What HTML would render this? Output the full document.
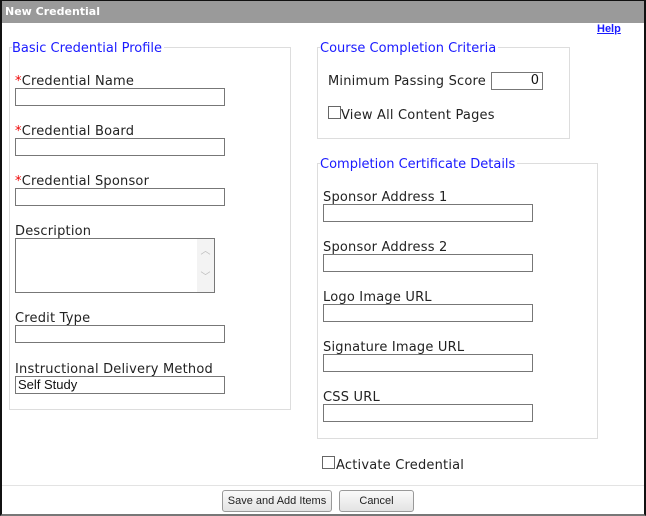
<!DOCTYPE html>
<html><head><style>
*{margin:0;padding:0;box-sizing:border-box}
body{width:646px;height:516px;background:#fff;position:relative;overflow:hidden;font-family:"DejaVu Sans","Liberation Sans",sans-serif;font-size:13px;color:#222}
.a{position:absolute;white-space:nowrap}
.frame{position:absolute;left:0;top:0;width:646px;height:516px;border-left:2px solid #111;border-right:2px solid #111;border-top:1px solid #111;border-bottom:2px solid #777}
.bar{position:absolute;left:2px;top:1px;width:642px;height:22px;background:#9a9a9a;color:#fff;font-weight:bold;font-size:11px;line-height:22px;padding-left:3px}
.fs{position:absolute;border:1px solid #ddd}
.lg{position:absolute;background:#fff;color:#1a1aff;font-size:13px;padding-right:2px;line-height:16px}
.in{position:absolute;border:1px solid #777;height:18px;background:#fff;font-family:"Liberation Sans",sans-serif;font-size:13px;line-height:16px;padding-left:2px;color:#111}
.lb{position:absolute;font-size:13px;line-height:16px;white-space:nowrap;letter-spacing:0.2px}
.lb b{color:#e00;font-weight:normal}
.cb{position:absolute;width:13px;height:13px;border:1px solid #666}
.btn{position:absolute;height:22px;border:1px solid #999;border-radius:3px;background:linear-gradient(#fafafa,#e3e3e3);font-family:"Liberation Sans",sans-serif;font-size:11px;line-height:20px;text-align:center;color:#222}
</style></head><body>
<div class="frame"></div>
<div class="bar">New Credential</div>
<div class="a" style="left:597px;top:23px;color:#1a1aff;font-weight:bold;font-size:11px;text-decoration:underline;font-family:'Liberation Sans',sans-serif">Help</div>

<div class="fs" style="left:9px;top:47px;width:282px;height:363px"></div>
<div class="lg" style="left:12px;top:41px">Basic Credential Profile</div>
<div class="lb" style="left:15px;top:74px"><b>*</b>Credential Name</div>
<div class="in" style="left:15px;top:88px;width:210px"></div>
<div class="lb" style="left:15px;top:124px"><b>*</b>Credential Board</div>
<div class="in" style="left:15px;top:138px;width:210px"></div>
<div class="lb" style="left:15px;top:174px"><b>*</b>Credential Sponsor</div>
<div class="in" style="left:15px;top:188px;width:210px"></div>
<div class="lb" style="left:15px;top:224px">Description</div>
<div class="in" style="left:15px;top:238px;width:200px;height:55px"><div style="position:absolute;right:0;top:0;width:17px;height:53px;background:#f3f3f3;color:#bbb;font-size:10px;text-align:center;line-height:26px">︿<br>﹀</div></div>
<div class="lb" style="left:15px;top:311px">Credit Type</div>
<div class="in" style="left:15px;top:325px;width:210px"></div>
<div class="lb" style="left:15px;top:362px">Instructional Delivery Method</div>
<div class="in" style="left:15px;top:376px;width:210px">Self Study</div>

<div class="fs" style="left:317px;top:47px;width:253px;height:92px"></div>
<div class="lg" style="left:320px;top:41px">Course Completion Criteria</div>
<div class="lb" style="left:328px;top:74px">Minimum Passing Score</div>
<div class="in" style="left:491px;top:72px;width:52px;text-align:right;padding-right:3px;font-family:'DejaVu Sans',sans-serif;font-size:13px">0</div>
<div class="cb" style="left:328px;top:106px"></div>
<div class="lb" style="left:341px;top:108px">View All Content Pages</div>

<div class="fs" style="left:317px;top:163px;width:281px;height:276px"></div>
<div class="lg" style="left:320px;top:157px">Completion Certificate Details</div>
<div class="lb" style="left:323px;top:190px">Sponsor Address 1</div>
<div class="in" style="left:323px;top:204px;width:210px"></div>
<div class="lb" style="left:323px;top:240px">Sponsor Address 2</div>
<div class="in" style="left:323px;top:254px;width:210px"></div>
<div class="lb" style="left:323px;top:290px">Logo Image URL</div>
<div class="in" style="left:323px;top:304px;width:210px"></div>
<div class="lb" style="left:323px;top:340px">Signature Image URL</div>
<div class="in" style="left:323px;top:354px;width:210px"></div>
<div class="lb" style="left:323px;top:390px">CSS URL</div>
<div class="in" style="left:323px;top:404px;width:210px"></div>

<div class="cb" style="left:322px;top:456px"></div>
<div class="lb" style="left:336px;top:458px">Activate Credential</div>
<div class="a" style="left:2px;top:485px;width:642px;height:1px;background:#e3e3e3"></div>
<div class="btn" style="left:222px;top:490px;width:110px">Save and Add Items</div>
<div class="btn" style="left:339px;top:490px;width:75px">Cancel</div>
</body></html>
